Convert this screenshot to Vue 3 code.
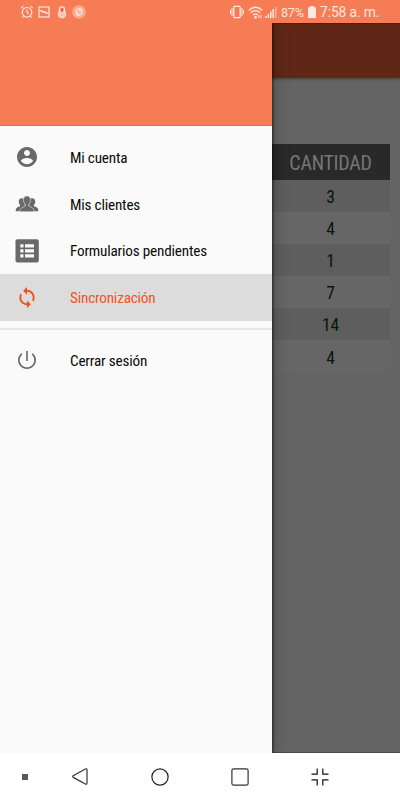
<script setup>
const items = [
  { label: 'Mi cuenta', icon: 'account' },
  { label: 'Mis clientes', icon: 'group' },
  { label: 'Formularios pendientes', icon: 'list' },
  { label: 'Sincronización', icon: 'sync', active: true },
]
const rows = ['3', '4', '1', '7', '14', '4']
</script>

<template>
  <div class="screen">
    <header class="status">
      <div class="notifications">
        <svg width="14" height="14" viewBox="0 0 14 14" fill="none" stroke="currentColor"><circle cx="7" cy="7.3" r="4.8" stroke-width="1.2"/><path d="M7 4.5v3l2 1.2M1.2 3.2l2.4-2M12.8 3.2l-2.4-2M3.4 11.3l-1 1.3M10.6 11.3l1 1.3" stroke-width="1.1"/></svg>
        <svg width="12" height="12" viewBox="0 0 12 12" fill="none" stroke="currentColor"><rect x="1" y="1" width="10" height="10" stroke-width="1.2"/><path d="M1.5 5.5l1.8-1 1.8 2 1.7-1 1.6 2 2.1-.6" stroke-width="1.3"/></svg>
        <svg width="10" height="13" viewBox="0 0 10 13"><path d="M2.5 6V3.3a2.5 2.5 0 0 1 5 0V6" fill="none" stroke="currentColor" stroke-width="1.3"/><circle cx="5" cy="8.2" r="4.3" fill="currentColor" opacity=".75"/><path d="M5 3v2.8" stroke="#e8602f" stroke-width="2.2"/><path d="M5 7.2v2.8" stroke="#f9a98e" stroke-width="1.2"/></svg>
        <svg width="14" height="14" viewBox="0 0 14 14" fill="none" stroke="currentColor"><circle cx="7" cy="7" r="6.8" fill="#ffa78d" stroke="none"/><path d="M9 3 5 4.5Q2.6 6.2 4.9 7.6L7.2 9M5 11l4-1.5q2.4-1.7.1-3.1L6.8 5M3.4 8.6l2.2 1.2M10.6 5.4 8.4 4.2" stroke-width="1.3"/></svg>
      </div>
      <div class="system">
        <svg width="14" height="14" viewBox="0 0 14 14" fill="none" stroke="currentColor"><rect x="3.8" y="1.3" width="6.4" height="11.4" rx=".8" stroke-width="1.3"/><path d="M2 3v8M12 3v8M.5 5v4M13.5 5v4" stroke-width="1"/></svg>
        <svg class="wifi" width="15" height="13" viewBox="0 0 15 13" fill="none" stroke="currentColor" stroke-width="1.3"><path d="M.7 4.2Q7.5-1.8 14.3 4.2M2.8 6.7q4.7-4 9.4 0M5 9.1q2.5-2 5 0"/><circle cx="7.5" cy="11.3" r=".7" fill="currentColor"/><path d="M11 9.2v3M13 9.2v3" stroke-width="1"/></svg>
        <svg class="signal" width="12" height="12" viewBox="0 0 12 12" stroke="currentColor"><path d="M1 10v2M3.4 8v4M5.8 5.5V12M8.2 3v9" stroke-width="1.5"/><path d="M10.8 1v11" stroke-width="1.6" opacity=".5"/></svg>
        <span class="battery-text">87%</span>
        <svg class="battery" width="8" height="12" viewBox="0 0 8 12" fill="currentColor"><path d="M2 0h4v1.2h2V12H0V1.2h2z"/></svg>
        <span class="clock">7:58 a. m.</span>
      </div>
    </header>

    <main class="body">
      <div class="page">
        <div class="appbar"></div>
        <div class="table">
          <div class="th"><span>CANTIDAD</span></div>
          <div v-for="(r, i) in rows" :key="i" class="td" :class="{ odd: i % 2 === 0 }"><span>{{ r }}</span></div>
        </div>
      </div>

      <aside class="drawer">
        <div class="hero"></div>
        <nav class="menu">
          <a v-for="it in items" :key="it.label" class="item" :class="{ active: it.active }">
            <span class="icon" :class="it.icon">
              <svg v-if="it.icon === 'account'" width="24" height="24" viewBox="0 0 24 24" fill="currentColor"><path d="M12 2C6.48 2 2 6.48 2 12s4.48 10 10 10 10-4.48 10-10S17.52 2 12 2zm0 3c1.66 0 3 1.34 3 3s-1.34 3-3 3-3-1.34-3-3 1.34-3 3-3zm0 14.2c-2.5 0-4.71-1.28-6-3.22.03-1.99 4-3.08 6-3.08 1.99 0 5.97 1.09 6 3.08-1.29 1.94-3.5 3.22-6 3.22z"/></svg>
              <svg v-else-if="it.icon === 'group'" width="24" height="24" viewBox="0 0 24 24" fill="currentColor"><path d="M7 6.2c-2.4 0-3.7 1.8-3.2 4.2.2 1.2.8 2 1.3 2.5v1L2.1 15.5Q.7 16.3.6 19.3h5.1l4.3-5-.5-7.5Q8.5 6.2 7 6.2zM17 6.2c2.4 0 3.7 1.8 3.2 4.2-.2 1.2-.8 2-1.3 2.5v1l3 1.6q1.4.8 1.5 3.8h-5.1l-4.3-5 .5-7.5q1-.6 2.5-.6z"/><path d="M12 4c-2.8 0-4 2.1-3.5 4.8.2 1.5.9 2.8 1.7 3.5v1.7l-3.9 2q-1.4.8-1.5 3.7h14.4q-.1-2.9-1.5-3.7l-3.9-2v-1.7c.8-.7 1.5-2 1.7-3.5C16 6.1 14.8 4 12 4z" stroke="#fafafa" stroke-width=".5"/></svg>
              <svg v-else-if="it.icon === 'list'" width="24" height="24" viewBox="0 0 24 24"><rect x=".5" y=".3" width="23.3" height="23.3" rx="2" fill="currentColor"/><path d="M5.3 5.2h3.2v3.2H5.3zM10 5.2h9v3.2h-9zM5.3 10.2h3.2v3.2H5.3zM10 10.2h9v3.2h-9zM5.3 15.2h3.2v3.2H5.3zM10 15.2h9v3.2h-9z" fill="#fafafa"/></svg>
              <svg v-else width="24" height="23" viewBox="0 0 24 24" fill="currentColor"><path d="M12 4V1L8 5l4 4V6c3.31 0 6 2.69 6 6 0 1.01-.25 1.97-.7 2.8l1.46 1.46C19.54 15.03 20 13.57 20 12c0-4.42-3.58-8-8-8zm0 14c-3.31 0-6-2.69-6-6 0-1.01.25-1.97.7-2.8L5.24 7.74C4.46 8.97 4 10.43 4 12c0 4.42 3.58 8 8 8v3l4-4-4-4v3z"/></svg>
            </span>
            <span class="label">{{ it.label }}</span>
          </a>
        </nav>
        <div class="divider"></div>
        <a class="item">
          <span class="icon power">
            <svg width="24" height="24" viewBox="0 0 24 24" fill="currentColor"><path d="M12.8 3h-1.6v10h1.600V3zm5.030 2.170l-1.300 1.300C18.150 7.800 19.300 9.810 19.300 12c0 4-3.270 7.300-7.300 7.300S4.700 16 4.700 12c0-2.190 1.150-4.200 2.760-5.530L6.170 5.170C4.230 6.820 3 9.260 3 12c0 4.970 4.030 9 9 9s9-4.030 9-9c0-2.740-1.230-5.180-3.170-6.830z"/></svg>
          </span>
          <span class="label">Cerrar sesión</span>
        </a>
      </aside>
    </main>

    <footer class="navbar">
      <i class="dot"></i>
      <svg class="back" width="18" height="20" viewBox="0 0 18 20" fill="none" stroke="#333" stroke-width="1.2"><path d="M14.4 2Q16 1.2 16 3v13q0 1.8-1.6 1L2.2 10.4q-1-.8 0-1.6z"/></svg>
      <svg class="home" width="20" height="20" viewBox="0 0 20 20" fill="none" stroke="#222" stroke-width="1.2"><circle cx="10" cy="10" r="8.1"/></svg>
      <svg class="recent" width="20" height="20" viewBox="0 0 20 20" fill="none" stroke="#333" stroke-width="1.2"><rect x="1.9" y="1.9" width="16.2" height="16.2" rx="1.5"/></svg>
      <svg class="shrink" width="20" height="20" viewBox="0 0 20 20" fill="none" stroke="#111" stroke-width="1.2"><path d="M1.5 7.2H7.2V1.5M18.5 7.2H12.8V1.5M1.5 12.8H7.2v5.7M18.5 12.8H12.8v5.7"/></svg>
    </footer>
  </div>
</template>

<style>
body { margin: 0; background: #fff; }
</style>

<style scoped>
.screen { width: 400px; height: 800px; display: flex; flex-direction: column; overflow: hidden; font-family: Roboto, "Liberation Sans", sans-serif; font-stretch: 75%; }
.status { height: 23px; flex: none; box-sizing: border-box; background: #f57c55; color: #ffe9e2; display: flex; justify-content: space-between; padding: 0 20px; font-stretch: 100%; }
.notifications, .system { display: flex; align-items: center; height: 24px; }
.notifications { gap: 6px; }
.notifications svg:nth-child(2) { margin-left: -2px; }
.notifications svg:nth-child(3) { margin-left: 1px; }
.notifications svg:nth-child(4) { margin-left: -1px; }
.wifi { margin-left: 4px; }
.signal { margin-left: 2px; }
.battery-text { font-size: 12.5px; letter-spacing: -.2px; width: 24px; margin-left: 4px; white-space: nowrap; }
.battery { margin-left: 3px; }
.clock { font-size: 13.8px; letter-spacing: -.1px; margin-left: 4px; width: 60px; white-space: nowrap; }
.body { position: relative; height: 730px; flex: none; }
.page { height: 730px; box-sizing: border-box; overflow: hidden; background: #646464; border-bottom: 1px solid #484848; }
.appbar { height: 55px; background: #602717; border-top: 1px solid #4b2014; box-sizing: border-box; box-shadow: 0 1px 3px rgba(0, 0, 0, .35); }
.table { margin: 66px 10px 0 200px; }
.th { height: 35.5px; background: #292929; color: #767676; font-size: 20px; letter-spacing: -.28px; }
.td { height: 32.2px; background: #666; color: #0a160a; font-size: 17.6px; letter-spacing: -.3px; }
.td.odd { background: #5e5e5e; }
.th, .td { display: flex; align-items: center; justify-content: center; padding: 2px 0 0 71px; box-sizing: border-box; }
.drawer { position: absolute; left: 0; top: 0; width: 272px; height: 730px; background: #fafafa; box-shadow: 1px 0 3px rgba(0, 0, 0, .6), 4px 0 14px rgba(0, 0, 0, .16); clip-path: inset(0 -24px 0 0); }
.hero { height: 103px; background: #f57c55; border-bottom: 1px solid #ed6c42; box-sizing: border-box; }
.menu { padding-top: 8.5px; }
.item { height: 46.6px; display: flex; align-items: center; color: #0a0a0a; font-size: 15.2px; }
.icon { width: 24px; height: 24px; margin: 0 31px 0 15px; display: flex; align-items: center; justify-content: center; color: #696969; }
.account, .sync, .power { padding-bottom: 1px; }
.active { background: #dcdcdc; }
.active, .active .icon { color: #f5511e; }
.label { white-space: nowrap; letter-spacing: -.19px; padding-top: 1px; }
.divider { height: 2px; margin: 7px 0 7.5px; background: #e6e6e6; }
.navbar { height: 47px; background: #fff; display: flex; align-items: center; }
.dot { width: 6px; height: 6px; margin-left: 22px; background: #595959; }
.back { margin-left: 43px; }
.home { margin-left: 61px; }
.recent { margin-left: 60px; }
.shrink { margin-left: 60px; }
</style>
